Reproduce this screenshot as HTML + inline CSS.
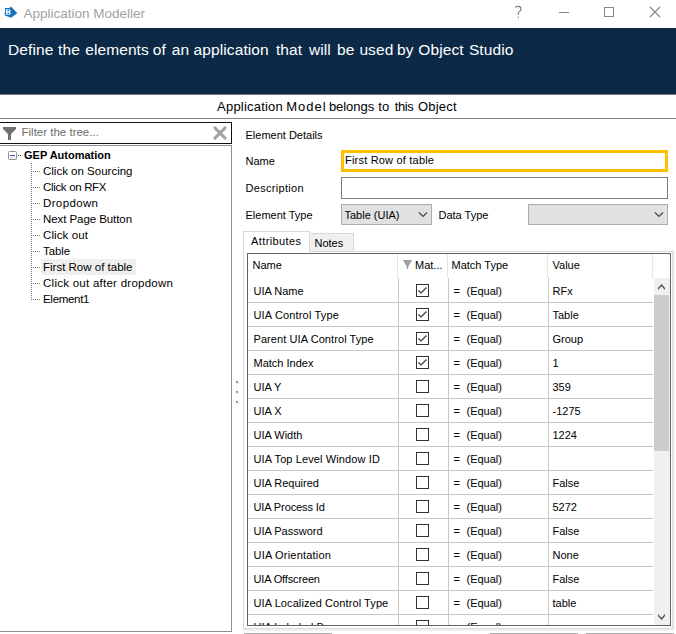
<!DOCTYPE html>
<html><head><meta charset="utf-8"><style>
html,body{margin:0;padding:0;width:676px;height:634px;overflow:hidden;background:#fff;font-family:"Liberation Sans", sans-serif;}
body div,body svg{position:absolute;}
.t{white-space:pre;line-height:1;}
</style></head><body>
<svg style="left:0;top:0" width="20" height="20" viewBox="0 0 20 20"><path d="M5 8H9.3L11 6.4L17.3 13.2L11 17.7L5 15.5L4.3 13.3L5 13Z" fill="#1574c0"/><path d="M5.9 9.2H8.9Q10.6 9.2 10.6 10.8Q10.6 11.8 10 12Q10.7 12.3 10.7 13.3Q10.7 14.8 9 14.8H5.9Z" fill="#e8f1fa"/><circle cx="8.3" cy="10.5" r="0.8" fill="#1574c0"/><circle cx="8.3" cy="13.5" r="0.8" fill="#1574c0"/></svg>
<div class="t" style="left:23.5px;top:6.57px;font-size:13.5px;color:#a2a2a2;font-weight:normal;letter-spacing:0px;">Application Modeller</div>
<svg style="left:512px;top:4px" width="12" height="16" viewBox="0 0 12 16"><path d="M3.2 3.6Q3.6 2.4 6 2.4Q9 2.4 9 5Q9 6.6 7.3 7.6Q6.3 8.3 6.3 9.5V11" stroke="#7a7a7a" stroke-width="1.1" fill="none"/><rect x="5.7" y="12.6" width="1.2" height="1.3" fill="#7a7a7a"/></svg>
<div style="left:559px;top:12px;width:10px;height:1px;background:#858585"></div>
<div style="left:604px;top:7px;width:10px;height:10px;border:1px solid #858585;box-sizing:border-box"></div>
<svg style="left:649px;top:6px" width="12" height="12" viewBox="0 0 12 12"><path d="M1 1L11 11M11 1L1 11" stroke="#858585" stroke-width="1.1"/></svg>
<div style="left:0px;top:28px;width:676px;height:66px;background:#0c2a47"></div>
<div style="left:0px;top:94px;width:676px;height:1px;background:#777"></div>
<div class="t" style="left:8.0px;top:42.08px;font-size:15.5px;color:#fff;font-weight:normal;letter-spacing:0.1px;">Define</div>
<div class="t" style="left:58.00000000000001px;top:42.08px;font-size:15.5px;color:#fff;font-weight:normal;letter-spacing:0.1px;">the</div>
<div class="t" style="left:85.2px;top:42.08px;font-size:15.5px;color:#fff;font-weight:normal;letter-spacing:0.1px;">elements</div>
<div class="t" style="left:152.7px;top:42.08px;font-size:15.5px;color:#fff;font-weight:normal;letter-spacing:0.1px;">of</div>
<div class="t" style="left:171.7px;top:42.08px;font-size:15.5px;color:#fff;font-weight:normal;letter-spacing:0.1px;">an</div>
<div class="t" style="left:193.6px;top:42.08px;font-size:15.5px;color:#fff;font-weight:normal;letter-spacing:0.1px;">application</div>
<div class="t" style="left:275.9px;top:42.08px;font-size:15.5px;color:#fff;font-weight:normal;letter-spacing:0.1px;">that</div>
<div class="t" style="left:308.9px;top:42.08px;font-size:15.5px;color:#fff;font-weight:normal;letter-spacing:0.1px;">will</div>
<div class="t" style="left:337.09999999999997px;top:42.08px;font-size:15.5px;color:#fff;font-weight:normal;letter-spacing:0.1px;">be</div>
<div class="t" style="left:359.4px;top:42.08px;font-size:15.5px;color:#fff;font-weight:normal;letter-spacing:0.1px;">used</div>
<div class="t" style="left:397.09999999999997px;top:42.08px;font-size:15.5px;color:#fff;font-weight:normal;letter-spacing:0.1px;">by</div>
<div class="t" style="left:418.3px;top:42.08px;font-size:15.5px;color:#fff;font-weight:normal;letter-spacing:0.1px;">Object</div>
<div class="t" style="left:468.90000000000003px;top:42.08px;font-size:15.5px;color:#fff;font-weight:normal;letter-spacing:0.1px;">Studio</div>
<div class="t" style="left:217.10000000000002px;top:100.00px;font-size:13px;color:#000;font-weight:normal;letter-spacing:0.2px;">Application</div>
<div class="t" style="left:286.2px;top:100.00px;font-size:13px;color:#000;font-weight:normal;letter-spacing:1.0px;">Model</div>
<div class="t" style="left:328.90000000000003px;top:100.00px;font-size:13px;color:#000;font-weight:normal;letter-spacing:-0.05px;">belongs</div>
<div class="t" style="left:378.3px;top:100.00px;font-size:13px;color:#000;font-weight:normal;letter-spacing:0.2px;">to</div>
<div class="t" style="left:394.8px;top:100.00px;font-size:13px;color:#000;font-weight:normal;letter-spacing:-0.4px;">this</div>
<div class="t" style="left:418.0px;top:100.00px;font-size:13px;color:#000;font-weight:normal;letter-spacing:0.2px;">Object</div>
<div style="left:0px;top:118px;width:676px;height:1px;background:#7c7c7c"></div>
<div style="left:-1px;top:122px;width:233px;height:22px;border:1px solid #111;box-sizing:border-box"></div>
<svg style="left:3px;top:127px" width="13" height="13" viewBox="0 0 13 13"><path d="M0 0H13V2L8 7V13H5V7L0 2Z" fill="#707070"/></svg>
<div class="t" style="left:21.5px;top:127.27px;font-size:11.5px;color:#6d6d6d;font-weight:normal;letter-spacing:0px;">Filter the tree...</div>
<svg style="left:212px;top:125px" width="16" height="16" viewBox="0 0 16 16"><path d="M2.9 2.9L13.1 13.1M13.1 2.9L2.9 13.1" stroke="#a4a4a4" stroke-width="3" stroke-linecap="round"/></svg>
<div style="left:-1px;top:145px;width:233px;height:487px;border:1px solid #8a909a;box-sizing:border-box"></div>
<div style="left:8px;top:151px;width:9px;height:9px;border:1px solid #8e8e8e;border-radius:1.5px;box-sizing:border-box;background:linear-gradient(#fff,#fff 50%,#e6e6e6)"></div>
<div style="left:10px;top:155px;width:5px;height:1px;background:#3a4fa0"></div>
<div style="left:18px;top:155px;width:1px;height:1px;background:#444"></div>
<div style="left:20px;top:155px;width:1px;height:1px;background:#444"></div>
<div class="t" style="left:24px;top:149.69px;font-size:11px;color:#000;font-weight:bold;letter-spacing:0px;">GEP Automation</div>
<div style="left:41px;top:259px;width:95px;height:16px;background:#efefef"></div>
<div class="t" style="left:43px;top:166.27px;font-size:11.5px;color:#000;font-weight:normal;letter-spacing:0px;">Click on Sourcing</div>
<div style="left:33px;top:171px;width:1px;height:1px;background:#777"></div>
<div style="left:35px;top:171px;width:1px;height:1px;background:#777"></div>
<div style="left:37px;top:171px;width:1px;height:1px;background:#777"></div>
<div style="left:39px;top:171px;width:1px;height:1px;background:#777"></div>
<div class="t" style="left:43px;top:182.27px;font-size:11.5px;color:#000;font-weight:normal;letter-spacing:-0.33px;">Click on RFX</div>
<div style="left:33px;top:187px;width:1px;height:1px;background:#777"></div>
<div style="left:35px;top:187px;width:1px;height:1px;background:#777"></div>
<div style="left:37px;top:187px;width:1px;height:1px;background:#777"></div>
<div style="left:39px;top:187px;width:1px;height:1px;background:#777"></div>
<div class="t" style="left:43px;top:198.27px;font-size:11.5px;color:#000;font-weight:normal;letter-spacing:0.37px;">Dropdown</div>
<div style="left:33px;top:203px;width:1px;height:1px;background:#777"></div>
<div style="left:35px;top:203px;width:1px;height:1px;background:#777"></div>
<div style="left:37px;top:203px;width:1px;height:1px;background:#777"></div>
<div style="left:39px;top:203px;width:1px;height:1px;background:#777"></div>
<div class="t" style="left:43px;top:214.27px;font-size:11.5px;color:#000;font-weight:normal;letter-spacing:-0.07px;">Next Page Button</div>
<div style="left:33px;top:219px;width:1px;height:1px;background:#777"></div>
<div style="left:35px;top:219px;width:1px;height:1px;background:#777"></div>
<div style="left:37px;top:219px;width:1px;height:1px;background:#777"></div>
<div style="left:39px;top:219px;width:1px;height:1px;background:#777"></div>
<div class="t" style="left:43px;top:230.27px;font-size:11.5px;color:#000;font-weight:normal;letter-spacing:0.1px;">Click out</div>
<div style="left:33px;top:235px;width:1px;height:1px;background:#777"></div>
<div style="left:35px;top:235px;width:1px;height:1px;background:#777"></div>
<div style="left:37px;top:235px;width:1px;height:1px;background:#777"></div>
<div style="left:39px;top:235px;width:1px;height:1px;background:#777"></div>
<div class="t" style="left:43px;top:246.27px;font-size:11.5px;color:#000;font-weight:normal;letter-spacing:-0.1px;">Table</div>
<div style="left:33px;top:251px;width:1px;height:1px;background:#777"></div>
<div style="left:35px;top:251px;width:1px;height:1px;background:#777"></div>
<div style="left:37px;top:251px;width:1px;height:1px;background:#777"></div>
<div style="left:39px;top:251px;width:1px;height:1px;background:#777"></div>
<div class="t" style="left:43px;top:262.27px;font-size:11.5px;color:#000;font-weight:normal;letter-spacing:0px;">First Row of table</div>
<div style="left:33px;top:267px;width:1px;height:1px;background:#777"></div>
<div style="left:35px;top:267px;width:1px;height:1px;background:#777"></div>
<div style="left:37px;top:267px;width:1px;height:1px;background:#777"></div>
<div style="left:39px;top:267px;width:1px;height:1px;background:#777"></div>
<div class="t" style="left:43px;top:278.27px;font-size:11.5px;color:#000;font-weight:normal;letter-spacing:0.26px;">Click out after dropdown</div>
<div style="left:33px;top:283px;width:1px;height:1px;background:#777"></div>
<div style="left:35px;top:283px;width:1px;height:1px;background:#777"></div>
<div style="left:37px;top:283px;width:1px;height:1px;background:#777"></div>
<div style="left:39px;top:283px;width:1px;height:1px;background:#777"></div>
<div class="t" style="left:43px;top:294.27px;font-size:11.5px;color:#000;font-weight:normal;letter-spacing:-0.3px;">Element1</div>
<div style="left:33px;top:299px;width:1px;height:1px;background:#777"></div>
<div style="left:35px;top:299px;width:1px;height:1px;background:#777"></div>
<div style="left:37px;top:299px;width:1px;height:1px;background:#777"></div>
<div style="left:39px;top:299px;width:1px;height:1px;background:#777"></div>
<div style="left:31px;top:163px;width:1px;height:1px;background:#777"></div>
<div style="left:31px;top:165px;width:1px;height:1px;background:#777"></div>
<div style="left:31px;top:167px;width:1px;height:1px;background:#777"></div>
<div style="left:31px;top:169px;width:1px;height:1px;background:#777"></div>
<div style="left:31px;top:171px;width:1px;height:1px;background:#777"></div>
<div style="left:31px;top:173px;width:1px;height:1px;background:#777"></div>
<div style="left:31px;top:175px;width:1px;height:1px;background:#777"></div>
<div style="left:31px;top:177px;width:1px;height:1px;background:#777"></div>
<div style="left:31px;top:179px;width:1px;height:1px;background:#777"></div>
<div style="left:31px;top:181px;width:1px;height:1px;background:#777"></div>
<div style="left:31px;top:183px;width:1px;height:1px;background:#777"></div>
<div style="left:31px;top:185px;width:1px;height:1px;background:#777"></div>
<div style="left:31px;top:187px;width:1px;height:1px;background:#777"></div>
<div style="left:31px;top:189px;width:1px;height:1px;background:#777"></div>
<div style="left:31px;top:191px;width:1px;height:1px;background:#777"></div>
<div style="left:31px;top:193px;width:1px;height:1px;background:#777"></div>
<div style="left:31px;top:195px;width:1px;height:1px;background:#777"></div>
<div style="left:31px;top:197px;width:1px;height:1px;background:#777"></div>
<div style="left:31px;top:199px;width:1px;height:1px;background:#777"></div>
<div style="left:31px;top:201px;width:1px;height:1px;background:#777"></div>
<div style="left:31px;top:203px;width:1px;height:1px;background:#777"></div>
<div style="left:31px;top:205px;width:1px;height:1px;background:#777"></div>
<div style="left:31px;top:207px;width:1px;height:1px;background:#777"></div>
<div style="left:31px;top:209px;width:1px;height:1px;background:#777"></div>
<div style="left:31px;top:211px;width:1px;height:1px;background:#777"></div>
<div style="left:31px;top:213px;width:1px;height:1px;background:#777"></div>
<div style="left:31px;top:215px;width:1px;height:1px;background:#777"></div>
<div style="left:31px;top:217px;width:1px;height:1px;background:#777"></div>
<div style="left:31px;top:219px;width:1px;height:1px;background:#777"></div>
<div style="left:31px;top:221px;width:1px;height:1px;background:#777"></div>
<div style="left:31px;top:223px;width:1px;height:1px;background:#777"></div>
<div style="left:31px;top:225px;width:1px;height:1px;background:#777"></div>
<div style="left:31px;top:227px;width:1px;height:1px;background:#777"></div>
<div style="left:31px;top:229px;width:1px;height:1px;background:#777"></div>
<div style="left:31px;top:231px;width:1px;height:1px;background:#777"></div>
<div style="left:31px;top:233px;width:1px;height:1px;background:#777"></div>
<div style="left:31px;top:235px;width:1px;height:1px;background:#777"></div>
<div style="left:31px;top:237px;width:1px;height:1px;background:#777"></div>
<div style="left:31px;top:239px;width:1px;height:1px;background:#777"></div>
<div style="left:31px;top:241px;width:1px;height:1px;background:#777"></div>
<div style="left:31px;top:243px;width:1px;height:1px;background:#777"></div>
<div style="left:31px;top:245px;width:1px;height:1px;background:#777"></div>
<div style="left:31px;top:247px;width:1px;height:1px;background:#777"></div>
<div style="left:31px;top:249px;width:1px;height:1px;background:#777"></div>
<div style="left:31px;top:251px;width:1px;height:1px;background:#777"></div>
<div style="left:31px;top:253px;width:1px;height:1px;background:#777"></div>
<div style="left:31px;top:255px;width:1px;height:1px;background:#777"></div>
<div style="left:31px;top:257px;width:1px;height:1px;background:#777"></div>
<div style="left:31px;top:259px;width:1px;height:1px;background:#777"></div>
<div style="left:31px;top:261px;width:1px;height:1px;background:#777"></div>
<div style="left:31px;top:263px;width:1px;height:1px;background:#777"></div>
<div style="left:31px;top:265px;width:1px;height:1px;background:#777"></div>
<div style="left:31px;top:267px;width:1px;height:1px;background:#777"></div>
<div style="left:31px;top:269px;width:1px;height:1px;background:#777"></div>
<div style="left:31px;top:271px;width:1px;height:1px;background:#777"></div>
<div style="left:31px;top:273px;width:1px;height:1px;background:#777"></div>
<div style="left:31px;top:275px;width:1px;height:1px;background:#777"></div>
<div style="left:31px;top:277px;width:1px;height:1px;background:#777"></div>
<div style="left:31px;top:279px;width:1px;height:1px;background:#777"></div>
<div style="left:31px;top:281px;width:1px;height:1px;background:#777"></div>
<div style="left:31px;top:283px;width:1px;height:1px;background:#777"></div>
<div style="left:31px;top:285px;width:1px;height:1px;background:#777"></div>
<div style="left:31px;top:287px;width:1px;height:1px;background:#777"></div>
<div style="left:31px;top:289px;width:1px;height:1px;background:#777"></div>
<div style="left:31px;top:291px;width:1px;height:1px;background:#777"></div>
<div style="left:31px;top:293px;width:1px;height:1px;background:#777"></div>
<div style="left:31px;top:295px;width:1px;height:1px;background:#777"></div>
<div style="left:31px;top:297px;width:1px;height:1px;background:#777"></div>
<div style="left:31px;top:299px;width:1px;height:1px;background:#777"></div>
<div style="left:236px;top:381px;width:1px;height:1px;background:#6e6e6e"></div>
<div style="left:237px;top:381px;width:1px;height:1px;background:#9a9a9a"></div>
<div style="left:236px;top:382px;width:1px;height:1px;background:#8a8a8a"></div>
<div style="left:237px;top:382px;width:1px;height:1px;background:#d4d4d4"></div>
<div style="left:238px;top:382px;width:1px;height:1px;background:#dcdcdc"></div>
<div style="left:237px;top:383px;width:1px;height:1px;background:#dcdcdc"></div>
<div style="left:238px;top:383px;width:1px;height:1px;background:#e4e4e4"></div>
<div style="left:236px;top:391px;width:1px;height:1px;background:#6e6e6e"></div>
<div style="left:237px;top:391px;width:1px;height:1px;background:#9a9a9a"></div>
<div style="left:236px;top:392px;width:1px;height:1px;background:#8a8a8a"></div>
<div style="left:237px;top:392px;width:1px;height:1px;background:#d4d4d4"></div>
<div style="left:238px;top:392px;width:1px;height:1px;background:#dcdcdc"></div>
<div style="left:237px;top:393px;width:1px;height:1px;background:#dcdcdc"></div>
<div style="left:238px;top:393px;width:1px;height:1px;background:#e4e4e4"></div>
<div style="left:236px;top:401px;width:1px;height:1px;background:#6e6e6e"></div>
<div style="left:237px;top:401px;width:1px;height:1px;background:#9a9a9a"></div>
<div style="left:236px;top:402px;width:1px;height:1px;background:#8a8a8a"></div>
<div style="left:237px;top:402px;width:1px;height:1px;background:#d4d4d4"></div>
<div style="left:238px;top:402px;width:1px;height:1px;background:#dcdcdc"></div>
<div style="left:237px;top:403px;width:1px;height:1px;background:#dcdcdc"></div>
<div style="left:238px;top:403px;width:1px;height:1px;background:#e4e4e4"></div>
<div class="t" style="left:245.5px;top:129.69px;font-size:11px;color:#000;font-weight:normal;letter-spacing:0px;">Element Details</div>
<div class="t" style="left:245.5px;top:155.69px;font-size:11px;color:#000;font-weight:normal;letter-spacing:0px;">Name</div>
<div class="t" style="left:245.5px;top:182.69px;font-size:11px;color:#000;font-weight:normal;letter-spacing:0.3px;">Description</div>
<div class="t" style="left:245.5px;top:209.69px;font-size:11px;color:#000;font-weight:normal;letter-spacing:0px;">Element Type</div>
<div style="left:341px;top:150px;width:327px;height:22px;border:3px solid #ffbf00;box-sizing:border-box"></div>
<div class="t" style="left:345px;top:154.69px;font-size:11px;color:#000;font-weight:normal;letter-spacing:0.2px;">First Row of table</div>
<div style="left:341px;top:177px;width:327px;height:22px;border:1px solid #7a7a7a;box-sizing:border-box"></div>
<div style="left:341px;top:204px;width:91px;height:21px;border:1px solid #adadad;background:#e1e1e1;box-sizing:border-box"></div>
<div class="t" style="left:344.5px;top:209.69px;font-size:11px;color:#000;font-weight:normal;letter-spacing:0px;">Table (UIA)</div>
<svg style="left:418px;top:211px" width="10" height="7" viewBox="0 0 10 7"><path d="M1 1.5L5 5.5L9 1.5" stroke="#444" stroke-width="1.2" fill="none"/></svg>
<div class="t" style="left:438.5px;top:209.69px;font-size:11px;color:#000;font-weight:normal;letter-spacing:0px;">Data Type</div>
<div style="left:528px;top:204px;width:140px;height:21px;border:1px solid #adadad;background:#e1e1e1;box-sizing:border-box"></div>
<svg style="left:654px;top:211px" width="10" height="7" viewBox="0 0 10 7"><path d="M1 1.5L5 5.5L9 1.5" stroke="#444" stroke-width="1.2" fill="none"/></svg>
<div style="left:243px;top:231px;width:67px;height:21px;border:1px solid #d9d9d9;border-bottom:none;background:#fff;box-sizing:border-box"></div>
<div class="t" style="left:251px;top:235.69px;font-size:11px;color:#000;font-weight:normal;letter-spacing:0.4px;">Attributes</div>
<div style="left:309px;top:233px;width:45px;height:19px;border:1px solid #d9d9d9;border-bottom:none;background:#f0f0f0;box-sizing:border-box"></div>
<div class="t" style="left:314.5px;top:237.69px;font-size:11px;color:#000;font-weight:normal;letter-spacing:0px;">Notes</div>
<div style="left:243px;top:251px;width:432px;height:380px;border-right:2px solid #f0f0f0;border-bottom:2px solid #f0f0f0;box-sizing:border-box"></div>
<div style="left:243px;top:251px;width:430px;height:378px;border:1px solid #d9d9d9;box-sizing:border-box"></div>
<div style="left:244px;top:251px;width:65px;height:1px;background:#fff"></div>
<div style="left:247px;top:253px;width:424px;height:373px;border:1px solid #646464;box-sizing:border-box;background:#fff"></div>
<div style="left:397px;top:254px;width:1px;height:24px;background:#e5e5e5"></div>
<div style="left:447px;top:254px;width:1px;height:24px;background:#e5e5e5"></div>
<div style="left:547px;top:254px;width:1px;height:24px;background:#e5e5e5"></div>
<div style="left:652px;top:254px;width:1px;height:24px;background:#e5e5e5"></div>
<div class="t" style="left:252.5px;top:259.69px;font-size:11px;color:#000;font-weight:normal;letter-spacing:0px;">Name</div>
<svg style="left:403px;top:260px" width="9" height="9" viewBox="0 0 9 9"><path d="M0 0H9L5.2 7V9H3.8V7Z" fill="#a0a0a0"/></svg>
<div class="t" style="left:415px;top:259.69px;font-size:11px;color:#000;font-weight:normal;letter-spacing:0px;">Mat...</div>
<div class="t" style="left:451.5px;top:259.69px;font-size:11px;color:#000;font-weight:normal;letter-spacing:0px;">Match Type</div>
<div class="t" style="left:552.5px;top:259.69px;font-size:11px;color:#000;font-weight:normal;letter-spacing:0px;">Value</div>
<div style="left:248px;top:278px;width:405px;height:347px;overflow:hidden">
<div class="t" style="left:5.5px;top:7.69px;font-size:11px;color:#000;font-weight:normal;letter-spacing:0px;">UIA Name</div>
<div style="left:168px;top:6px;width:13px;height:13px;border:1px solid #333;box-sizing:border-box"></div>
<svg style="left:168px;top:6px" width="13" height="13" viewBox="0 0 13 13"><path d="M2.5 6.5L5 9L10.5 3.5" stroke="#333" stroke-width="1.1" fill="none"/></svg>
<div class="t" style="left:205.5px;top:7.69px;font-size:11px;color:#000;font-weight:normal;letter-spacing:0px;">=</div>
<div class="t" style="left:218.5px;top:7.69px;font-size:11px;color:#000;font-weight:normal;letter-spacing:0px;">(Equal)</div>
<div class="t" style="left:304.5px;top:7.69px;font-size:11px;color:#000;font-weight:normal;letter-spacing:0px;">RFx</div>
<div style="left:0;top:24px;width:405px;height:1px;background:#c8c8c8"></div>
<div class="t" style="left:5.5px;top:31.69px;font-size:11px;color:#000;font-weight:normal;letter-spacing:0.16px;">UIA Control Type</div>
<div style="left:168px;top:30px;width:13px;height:13px;border:1px solid #333;box-sizing:border-box"></div>
<svg style="left:168px;top:30px" width="13" height="13" viewBox="0 0 13 13"><path d="M2.5 6.5L5 9L10.5 3.5" stroke="#333" stroke-width="1.1" fill="none"/></svg>
<div class="t" style="left:205.5px;top:31.69px;font-size:11px;color:#000;font-weight:normal;letter-spacing:0px;">=</div>
<div class="t" style="left:218.5px;top:31.69px;font-size:11px;color:#000;font-weight:normal;letter-spacing:0px;">(Equal)</div>
<div class="t" style="left:304.5px;top:31.69px;font-size:11px;color:#000;font-weight:normal;letter-spacing:0px;">Table</div>
<div style="left:0;top:48px;width:405px;height:1px;background:#c8c8c8"></div>
<div class="t" style="left:5.5px;top:55.69px;font-size:11px;color:#000;font-weight:normal;letter-spacing:0.08px;">Parent UIA Control Type</div>
<div style="left:168px;top:54px;width:13px;height:13px;border:1px solid #333;box-sizing:border-box"></div>
<svg style="left:168px;top:54px" width="13" height="13" viewBox="0 0 13 13"><path d="M2.5 6.5L5 9L10.5 3.5" stroke="#333" stroke-width="1.1" fill="none"/></svg>
<div class="t" style="left:205.5px;top:55.69px;font-size:11px;color:#000;font-weight:normal;letter-spacing:0px;">=</div>
<div class="t" style="left:218.5px;top:55.69px;font-size:11px;color:#000;font-weight:normal;letter-spacing:0px;">(Equal)</div>
<div class="t" style="left:304.5px;top:55.69px;font-size:11px;color:#000;font-weight:normal;letter-spacing:0px;">Group</div>
<div style="left:0;top:72px;width:405px;height:1px;background:#c8c8c8"></div>
<div class="t" style="left:5.5px;top:79.69px;font-size:11px;color:#000;font-weight:normal;letter-spacing:0px;">Match Index</div>
<div style="left:168px;top:78px;width:13px;height:13px;border:1px solid #333;box-sizing:border-box"></div>
<svg style="left:168px;top:78px" width="13" height="13" viewBox="0 0 13 13"><path d="M2.5 6.5L5 9L10.5 3.5" stroke="#333" stroke-width="1.1" fill="none"/></svg>
<div class="t" style="left:205.5px;top:79.69px;font-size:11px;color:#000;font-weight:normal;letter-spacing:0px;">=</div>
<div class="t" style="left:218.5px;top:79.69px;font-size:11px;color:#000;font-weight:normal;letter-spacing:0px;">(Equal)</div>
<div class="t" style="left:304.5px;top:79.69px;font-size:11px;color:#000;font-weight:normal;letter-spacing:0px;">1</div>
<div style="left:0;top:96px;width:405px;height:1px;background:#c8c8c8"></div>
<div class="t" style="left:5.5px;top:103.69px;font-size:11px;color:#000;font-weight:normal;letter-spacing:0px;">UIA Y</div>
<div style="left:168px;top:102px;width:13px;height:13px;border:1px solid #333;box-sizing:border-box"></div>
<div class="t" style="left:205.5px;top:103.69px;font-size:11px;color:#000;font-weight:normal;letter-spacing:0px;">=</div>
<div class="t" style="left:218.5px;top:103.69px;font-size:11px;color:#000;font-weight:normal;letter-spacing:0px;">(Equal)</div>
<div class="t" style="left:304.5px;top:103.69px;font-size:11px;color:#000;font-weight:normal;letter-spacing:0px;">359</div>
<div style="left:0;top:120px;width:405px;height:1px;background:#c8c8c8"></div>
<div class="t" style="left:5.5px;top:127.69px;font-size:11px;color:#000;font-weight:normal;letter-spacing:0px;">UIA X</div>
<div style="left:168px;top:126px;width:13px;height:13px;border:1px solid #333;box-sizing:border-box"></div>
<div class="t" style="left:205.5px;top:127.69px;font-size:11px;color:#000;font-weight:normal;letter-spacing:0px;">=</div>
<div class="t" style="left:218.5px;top:127.69px;font-size:11px;color:#000;font-weight:normal;letter-spacing:0px;">(Equal)</div>
<div class="t" style="left:304.5px;top:127.69px;font-size:11px;color:#000;font-weight:normal;letter-spacing:0px;">-1275</div>
<div style="left:0;top:144px;width:405px;height:1px;background:#c8c8c8"></div>
<div class="t" style="left:5.5px;top:151.69px;font-size:11px;color:#000;font-weight:normal;letter-spacing:0px;">UIA Width</div>
<div style="left:168px;top:150px;width:13px;height:13px;border:1px solid #333;box-sizing:border-box"></div>
<div class="t" style="left:205.5px;top:151.69px;font-size:11px;color:#000;font-weight:normal;letter-spacing:0px;">=</div>
<div class="t" style="left:218.5px;top:151.69px;font-size:11px;color:#000;font-weight:normal;letter-spacing:0px;">(Equal)</div>
<div class="t" style="left:304.5px;top:151.69px;font-size:11px;color:#000;font-weight:normal;letter-spacing:0px;">1224</div>
<div style="left:0;top:168px;width:405px;height:1px;background:#c8c8c8"></div>
<div class="t" style="left:5.5px;top:175.69px;font-size:11px;color:#000;font-weight:normal;letter-spacing:0.11px;">UIA Top Level Window ID</div>
<div style="left:168px;top:174px;width:13px;height:13px;border:1px solid #333;box-sizing:border-box"></div>
<div class="t" style="left:205.5px;top:175.69px;font-size:11px;color:#000;font-weight:normal;letter-spacing:0px;">=</div>
<div class="t" style="left:218.5px;top:175.69px;font-size:11px;color:#000;font-weight:normal;letter-spacing:0px;">(Equal)</div>
<div style="left:0;top:192px;width:405px;height:1px;background:#c8c8c8"></div>
<div class="t" style="left:5.5px;top:199.69px;font-size:11px;color:#000;font-weight:normal;letter-spacing:0px;">UIA Required</div>
<div style="left:168px;top:198px;width:13px;height:13px;border:1px solid #333;box-sizing:border-box"></div>
<div class="t" style="left:205.5px;top:199.69px;font-size:11px;color:#000;font-weight:normal;letter-spacing:0px;">=</div>
<div class="t" style="left:218.5px;top:199.69px;font-size:11px;color:#000;font-weight:normal;letter-spacing:0px;">(Equal)</div>
<div class="t" style="left:304.5px;top:199.69px;font-size:11px;color:#000;font-weight:normal;letter-spacing:0px;">False</div>
<div style="left:0;top:216px;width:405px;height:1px;background:#c8c8c8"></div>
<div class="t" style="left:5.5px;top:223.69px;font-size:11px;color:#000;font-weight:normal;letter-spacing:-0.11px;">UIA Process Id</div>
<div style="left:168px;top:222px;width:13px;height:13px;border:1px solid #333;box-sizing:border-box"></div>
<div class="t" style="left:205.5px;top:223.69px;font-size:11px;color:#000;font-weight:normal;letter-spacing:0px;">=</div>
<div class="t" style="left:218.5px;top:223.69px;font-size:11px;color:#000;font-weight:normal;letter-spacing:0px;">(Equal)</div>
<div class="t" style="left:304.5px;top:223.69px;font-size:11px;color:#000;font-weight:normal;letter-spacing:0px;">5272</div>
<div style="left:0;top:240px;width:405px;height:1px;background:#c8c8c8"></div>
<div class="t" style="left:5.5px;top:247.69px;font-size:11px;color:#000;font-weight:normal;letter-spacing:0px;">UIA Password</div>
<div style="left:168px;top:246px;width:13px;height:13px;border:1px solid #333;box-sizing:border-box"></div>
<div class="t" style="left:205.5px;top:247.69px;font-size:11px;color:#000;font-weight:normal;letter-spacing:0px;">=</div>
<div class="t" style="left:218.5px;top:247.69px;font-size:11px;color:#000;font-weight:normal;letter-spacing:0px;">(Equal)</div>
<div class="t" style="left:304.5px;top:247.69px;font-size:11px;color:#000;font-weight:normal;letter-spacing:0px;">False</div>
<div style="left:0;top:264px;width:405px;height:1px;background:#c8c8c8"></div>
<div class="t" style="left:5.5px;top:271.69px;font-size:11px;color:#000;font-weight:normal;letter-spacing:0.2px;">UIA Orientation</div>
<div style="left:168px;top:270px;width:13px;height:13px;border:1px solid #333;box-sizing:border-box"></div>
<div class="t" style="left:205.5px;top:271.69px;font-size:11px;color:#000;font-weight:normal;letter-spacing:0px;">=</div>
<div class="t" style="left:218.5px;top:271.69px;font-size:11px;color:#000;font-weight:normal;letter-spacing:0px;">(Equal)</div>
<div class="t" style="left:304.5px;top:271.69px;font-size:11px;color:#000;font-weight:normal;letter-spacing:0px;">None</div>
<div style="left:0;top:288px;width:405px;height:1px;background:#c8c8c8"></div>
<div class="t" style="left:5.5px;top:295.69px;font-size:11px;color:#000;font-weight:normal;letter-spacing:-0.15px;">UIA Offscreen</div>
<div style="left:168px;top:294px;width:13px;height:13px;border:1px solid #333;box-sizing:border-box"></div>
<div class="t" style="left:205.5px;top:295.69px;font-size:11px;color:#000;font-weight:normal;letter-spacing:0px;">=</div>
<div class="t" style="left:218.5px;top:295.69px;font-size:11px;color:#000;font-weight:normal;letter-spacing:0px;">(Equal)</div>
<div class="t" style="left:304.5px;top:295.69px;font-size:11px;color:#000;font-weight:normal;letter-spacing:0px;">False</div>
<div style="left:0;top:312px;width:405px;height:1px;background:#c8c8c8"></div>
<div class="t" style="left:5.5px;top:319.69px;font-size:11px;color:#000;font-weight:normal;letter-spacing:0.09px;">UIA Localized Control Type</div>
<div style="left:168px;top:318px;width:13px;height:13px;border:1px solid #333;box-sizing:border-box"></div>
<div class="t" style="left:205.5px;top:319.69px;font-size:11px;color:#000;font-weight:normal;letter-spacing:0px;">=</div>
<div class="t" style="left:218.5px;top:319.69px;font-size:11px;color:#000;font-weight:normal;letter-spacing:0px;">(Equal)</div>
<div class="t" style="left:304.5px;top:319.69px;font-size:11px;color:#000;font-weight:normal;letter-spacing:0px;">table</div>
<div style="left:0;top:336px;width:405px;height:1px;background:#c8c8c8"></div>
<div class="t" style="left:5.5px;top:343.69px;font-size:11px;color:#000;font-weight:normal;letter-spacing:0px;">UIA Labeled By</div>
<div style="left:168px;top:342px;width:13px;height:13px;border:1px solid #333;box-sizing:border-box"></div>
<div class="t" style="left:205.5px;top:343.69px;font-size:11px;color:#000;font-weight:normal;letter-spacing:0px;">=</div>
<div class="t" style="left:218.5px;top:343.69px;font-size:11px;color:#000;font-weight:normal;letter-spacing:0px;">(Equal)</div>
<div style="left:0;top:360px;width:405px;height:1px;background:#c8c8c8"></div>
<div style="left:150px;top:0;width:1px;height:347px;background:#c8c8c8"></div>
<div style="left:200px;top:0;width:1px;height:347px;background:#c8c8c8"></div>
<div style="left:300px;top:0;width:1px;height:347px;background:#c8c8c8"></div>
</div>
<div style="left:654px;top:278px;width:16px;height:347px;background:#f0f0f0"></div>
<div style="left:654px;top:295px;width:15px;height:156px;background:#cdcdcd"></div>
<svg style="left:656px;top:276px" width="12" height="20" viewBox="0 0 12 20"><path d="M2 12L5.5 8L9 12V14L5.5 10.3L2 14Z" fill="#555"/></svg>
<svg style="left:656px;top:606px" width="12" height="20" viewBox="0 0 12 20"><path d="M2 8L5.5 11.7L9 8V10L5.5 14L2 10Z" fill="#555"/></svg>
<div style="left:244px;top:633px;width:88px;height:1px;background:#adadad"></div>
<div style="left:490px;top:633px;width:88px;height:1px;background:#adadad"></div>
<div style="left:586px;top:633px;width:88px;height:1px;background:#adadad"></div>
</body></html>
